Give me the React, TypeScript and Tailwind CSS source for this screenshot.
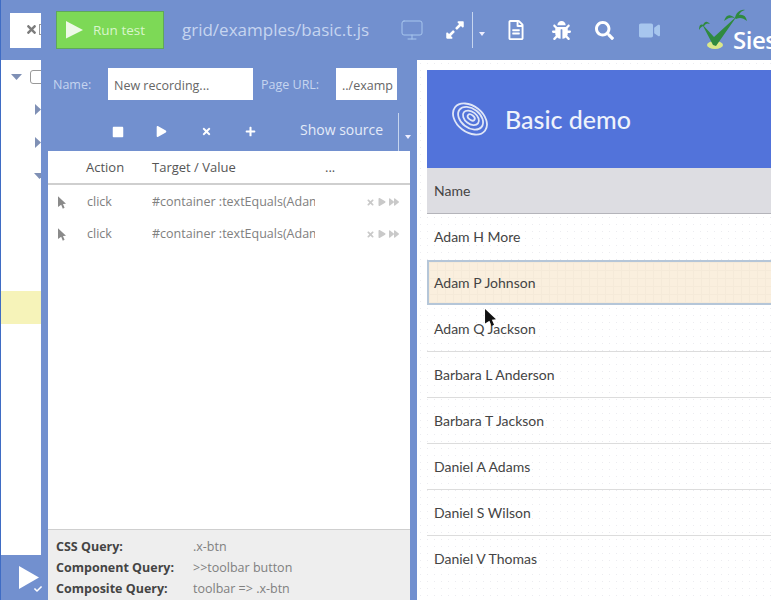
import React from "react";
import { Monitor } from "lucide-react";
import { FaBug, FaExpandAlt, FaPlay, FaPlus, FaRegFileAlt, FaSearch, FaTimes, FaVideo, FaStop, FaForward, FaCheck } from "react-icons/fa";

const Caret = ({ dir = "down", cls = "" }: { dir?: "down" | "right"; cls?: string }) => (
  <svg width={dir === "down" ? 11 : 6} height={dir === "down" ? 6 : 11} viewBox={dir === "down" ? "0 0 11 6" : "0 0 6 11"} className={cls}>
    <polygon points={dir === "down" ? "0,0 11,0 5.5,6" : "0,0 6,5.5 0,11"} fill="#7f90b5" />
  </svg>
);

const Pointer = ({ fill = "#8a8a8a", w = 9, h = 14 }: { fill?: string; w?: number; h?: number }) => (
  <svg width={w} height={h} viewBox="0 0 9 14">
    <path d="M0 0 L9 8.5 L5.6 8.8 L7.4 13 L5.4 14 L3.6 9.6 L0 12 Z" fill={fill} />
  </svg>
);

const StepRow = () => (
  <div className="flex h-8 items-center pt-[2px] text-[12.5px] text-[#808080]">
    <div className="w-[38px] pl-[10px]"><Pointer w={8} h={13} /></div>
    <div className="w-[66px] pl-[1px]">click</div>
    <div className="w-[163px] overflow-hidden whitespace-nowrap">#container :textEquals(Adam P Johnson)</div>
    <div className="ml-[51px] flex items-center gap-[3px] text-[#c9c9c9]">
      <FaTimes size={9} />
      <FaPlay size={8} />
      <FaForward size={10} />
    </div>
  </div>
);

const names = ["Adam Q Jackson", "Barbara L Anderson", "Barbara T Jackson", "Daniel A Adams", "Daniel S Wilson", "Daniel V Thomas"];

export default function App() {
  return (
    <div className="flex h-[600px] w-[771px] flex-col overflow-hidden border-l border-[#3f6cc4] bg-[#7290cf] font-['Open_Sans',sans-serif]">
      {/* Top bar */}
      <div className="flex h-[60px] shrink-0 items-center">
        <div className="ml-[9px] flex h-[35px] w-[31px] shrink-0 items-center justify-end overflow-hidden bg-white pb-[1px] text-[#7c7c7c]">
          <FaTimes size={13} className="shrink-0" />
          <span className="ml-[1px] mr-[-2px] h-[11px] w-[4px] shrink-0 border border-r-0 border-[#9a9a9a]" />
        </div>
        <div className="ml-[15px] flex h-[38px] w-[108px] shrink-0 items-center border border-[#5fa85a] bg-[#7dd956] pl-[9px] text-[13.5px] text-[#d9f5cc]">
          <svg width="18" height="18" viewBox="0 0 18 18" className="shrink-0"><polygon points="0,0 17,9 0,17.5" fill="#eef9e6" /></svg>
          <span className="ml-[9px] whitespace-nowrap">Run test</span>
        </div>
        <div className="ml-[18px] shrink-0 whitespace-nowrap text-[17px] text-[#c6d5ef]">grid/examples/basic.t.js</div>
        <div className="ml-[31px] flex shrink-0 items-center">
          <Monitor size={24} strokeWidth={1} className="shrink-0 text-[#a7c6ee]" />
          <FaExpandAlt size={20} className="ml-[21px] shrink-0 text-white" />
          <span className="ml-[7px] h-[36px] w-px shrink-0 bg-[#c6d5ef]" />
          <svg width="6" height="4" viewBox="0 0 6 4" className="ml-[6px] mt-[7px] shrink-0"><polygon points="0,0 6,0 3,4" fill="#eef" /></svg>
          <FaRegFileAlt size={20} className="ml-[21px] shrink-0 text-white" />
          <FaBug size={19} className="ml-[26px] shrink-0 text-white" />
          <FaSearch size={19} className="ml-[24px] shrink-0 text-white" />
          <FaVideo size={21} className="ml-[25px] shrink-0 text-[#a7c6ee]" />
          <div className="ml-[39px] flex shrink-0 items-end">
            <svg width="48" height="44" viewBox="0 0 48 44" className="shrink-0">
              <ellipse cx="16" cy="37" rx="8" ry="4" fill="#dbe88a" />
              <path d="M14 37 L3 16 L15 29 L38 8 L17 38 Z" fill="#2f8a3f" />
              <path d="M36 10 C30 5 27 7 25 13 C30 9 33 9 36 10 C37 5 41 1 46 2 C42 3 41 5 40 7 C44 6 47 8 48 13 C44 10 41 9 37 11 Z" fill="#2f8a3f" />
              <path d="M4 17 C1 15 0 19 0 22 C2 19 3 18 5 18 C7 15 9 15 11 16 C8 13 6 13 4 17 Z" fill="#2f8a3f" />
            </svg>
            <span className="-ml-[14px] text-[24px] font-semibold leading-none tracking-[-0.5px] text-white">Siesta</span>
          </div>
        </div>
      </div>

      {/* Body */}
      <div className="flex min-h-0 flex-1">
        {/* Tree */}
        <div className="flex w-[40px] shrink-0 flex-col">
          <div className="h-[495px] overflow-hidden bg-white">
            <div className="flex h-[33px] items-center pl-[10px]">
              <Caret cls="shrink-0" />
              <span className="ml-[8px] h-[14px] w-[14px] shrink-0 rounded-[3px] border border-[#999]" />
            </div>
            <div className="flex h-[33px] items-center pl-[34px]"><Caret dir="right" /></div>
            <div className="flex h-[33px] items-center pl-[34px]"><Caret dir="right" /></div>
            <div className="flex h-[33px] items-center pl-[33px]"><Caret cls="shrink-0" /></div>
            <div className="h-[99px]" />
            <div className="h-[33px] bg-[#f6f3b9]" />
          </div>
          <div className="flex flex-1 items-center justify-center pl-[16px]">
            <div className="relative">
              <svg width="20" height="24" viewBox="0 0 20 24"><polygon points="0,0 20,11.5 0,23" fill="#fff" /></svg>
              <FaCheck size={8} className="absolute bottom-[-3px] right-[-3px] text-white" />
            </div>
          </div>
        </div>

        {/* Recorder */}
        <div className="flex w-[376px] shrink-0 flex-col">
          <div className="flex h-[52px] items-center pb-[4px] pl-[12px] text-[12.5px] text-[#c6d5ef]">
            <span className="w-[55px] pt-[2px]">Name:</span>
            <div className="flex h-[32px] w-[145px] items-center bg-white pl-[6px] pt-[4px] text-[12.5px] text-[#666]">New recording...</div>
            <span className="ml-[8px] w-[75px] pt-[2px]">Page URL:</span>
            <div className="flex h-[32px] w-[61px] items-center overflow-hidden whitespace-nowrap bg-white pl-[6px] pt-[4px] text-[12.5px] text-[#666]">../examp</div>
          </div>
          <div className="flex h-[39px] items-center text-white">
            <FaStop size={12} className="ml-[71px] shrink-0" />
            <FaPlay size={11} className="ml-[32px] shrink-0" />
            <FaTimes size={11} className="ml-[34px] shrink-0" />
            <FaPlus size={11} className="ml-[33px] shrink-0" />
            <span className="ml-[44px] whitespace-nowrap pb-[4px] text-[14px] text-[#e4ebf8]">Show source</span>
            <span className="ml-[15px] h-[38px] w-px shrink-0 bg-[#c6d5ef]" />
            <svg width="6" height="4" viewBox="0 0 6 4" className="ml-[6px] mt-[10px] shrink-0"><polygon points="0,0 6,0 3,4" fill="#eef" /></svg>
          </div>
          <div className="ml-[7px] flex min-h-0 w-[362px] flex-1 flex-col bg-white">
            <div className="flex h-[34px] shrink-0 items-center border-b-2 border-[#cfcfcf] pt-[1px] text-[13px] text-[#555]">
              <span className="ml-[38px] w-[66px]">Action</span>
              <span className="w-[173px]">Target / Value</span>
              <span>...</span>
            </div>
            <StepRow />
            <StepRow />
            <div className="flex-1" />
            <div className="grid h-[71px] shrink-0 grid-cols-[137px_1fr] content-start gap-y-[2px] border-t border-[#cfcfcf] bg-[#eeeeee] pl-[8px] pt-[7px] text-[12.5px] leading-[19px] text-[#808080]">
              <b className="font-bold text-[#444]">CSS Query:</b><span>.x-btn</span>
              <b className="font-bold text-[#444]">Component Query:</b><span>&gt;&gt;toolbar button</span>
              <b className="font-bold text-[#444]">Composite Query:</b><span>toolbar =&gt; .x-btn</span>
            </div>
          </div>
        </div>

        {/* Demo */}
        <div className="min-w-0 flex-1 overflow-hidden bg-white bg-[radial-gradient(#ececf0_0.6px,transparent_0.8px)] bg-[length:7px_7px] pl-[10px] pt-[10px] font-['Lato',sans-serif]">
          <div className="w-[400px]">
            <div className="flex h-[98px] items-center bg-[#5273da] pl-[24px]">
              <svg width="38" height="38" viewBox="0 0 38 38" fill="none" stroke="#dfe6f7" strokeWidth="1.8">
                <g transform="rotate(38 19 19)">
                  <ellipse cx="19" cy="19" rx="19" ry="13" />
                  <ellipse cx="19" cy="18" rx="14" ry="9.5" />
                  <ellipse cx="19" cy="17.5" rx="9" ry="6" />
                  <ellipse cx="19" cy="17" rx="4" ry="2.5" />
                </g>
              </svg>
              <span className="ml-[16px] pt-[2px] text-[25px] font-medium text-[#eef2fb]">Basic demo</span>
            </div>
            <div className="flex h-[46px] items-center justify-between border-b border-[#b4b4ba] bg-[#dddde2] pl-[7px] pr-[30px] text-[14px] text-[#444]">
              <span>Name</span>
              <span className="h-[9px] w-[9px] rounded-full border border-[#888]" />
            </div>
            <div className="flex h-[46px] items-center border-b border-transparent pl-[7px] text-[14px] text-[#444]">Adam H More</div>
            <div className="mb-[1px] flex h-[45px] items-center border-2 border-[#b5c6d8] bg-[#faefde] bg-[linear-gradient(#f5ead9_1px,transparent_1px),linear-gradient(90deg,#f5ead9_1px,transparent_1px)] bg-[length:8px_8px] pl-[5px] text-[14px] text-[#444]">Adam P Johnson</div>
            <div className="relative">
              <div className="absolute left-[58px] top-[3px] z-10"><Pointer fill="#111" w={11} h={17} /></div>
              {names.map((n) => (
                <div key={n} className="flex h-[46px] items-center border-b border-[#dcdcdc] pl-[7px] text-[14px] text-[#444] last:border-transparent">{n}</div>
              ))}
            </div>
          </div>
        </div>
      </div>
    </div>
  );
}
